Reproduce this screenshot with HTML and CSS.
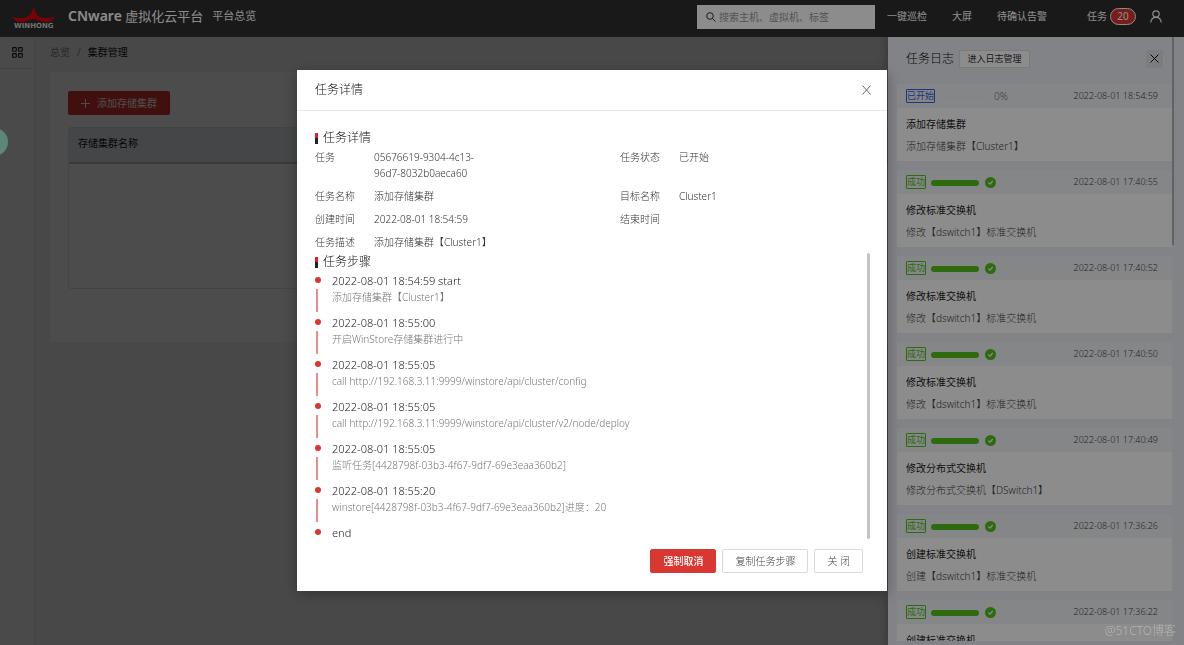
FILE: index.html
```html
<!DOCTYPE html>
<html lang="zh-CN">
<head>
<meta charset="utf-8">
<title>CNware 虚拟化云平台</title>
<link rel="stylesheet" href="styles.css">
</head>
<body>
<div class="app">
  <header class="topbar">
    <svg class="logo" width="44" height="22" viewBox="0 0 44 22" aria-label="WINHONG">
      <path fill="#e0000c" d="M0 9.500C5 11 10 12 14 10.500C18 9 20 5 21.500 0C23 5 25 9 29 10.500C33 12 38 11 43 9.500C41 13 38 15.500 33 15C28 14.500 25 12 21.500 12C18 12 15 14.500 10 15C5 15.500 2 13 0 9.500Z"/>
      <text x="2" y="21" class="logo-text">WINHONG</text>
    </svg>
    <h1 class="brand"><b>CNware</b> 虚拟化云平台</h1>
    <a class="nav-link" href="#">平台总览</a>
    <label class="search">
      <svg width="10" height="10" viewBox="0 0 10 10" fill="none" stroke="#333"><circle cx="4" cy="4" r="3.300"/><path d="M6.500 6.500L9.500 9.500"/></svg>
      <input type="text" placeholder="搜索主机、虚拟机、标签" aria-label="搜索">
    </label>
    <nav class="links">
      <a href="#">一键巡检</a>
      <a href="#">大屏</a>
      <a href="#">待确认告警</a>
    </nav>
    <a class="tasks" href="#">任务<span class="badge">20</span></a>
    <button class="user" aria-label="用户">
      <svg width="12" height="13" viewBox="0 0 12 13" fill="none" stroke="#fff" stroke-width="1.200"><circle cx="6" cy="4" r="3.200"/><path d="M.8 12.500C1 9.300 3 7.300 6 7.300S11 9.300 11.200 12.500"/></svg>
    </button>
  </header>
  <div class="workspace">
    <aside class="sidebar">
      <button class="menu" aria-label="菜单">
        <svg width="11" height="11" viewBox="0 0 11 11" fill="none" stroke="#222" stroke-width="1.100"><rect x=".6" y=".6" width="3.700" height="3.700" rx=".5"/><rect x="6.600" y=".6" width="3.700" height="3.700" rx=".5"/><rect x=".6" y="6.600" width="3.700" height="3.700" rx=".5"/><rect x="6.600" y="6.600" width="3.700" height="3.700" rx=".5"/></svg>
      </button>
    </aside>
    <main class="content">
      <nav class="crumbs"><a href="#">总览</a><i>/</i><span>集群管理</span></nav>
      <section class="panel">
        <button class="btn primary add"><svg width="9" height="9" viewBox="0 0 9 9" stroke="#fff"><path d="M4.500 0V9M0 4.500H9"/></svg>添加存储集群</button>
        <div class="table-box">
          <table><thead><tr><th>存储集群名称</th></tr></thead></table>
        </div>
      </section>
    </main>
    <div class="mask"></div>
    <aside class="drawer">
      <div class="drawer-head">
        <h2>任务日志</h2>
        <button class="log-btn">进入日志管理</button>
        <button class="drawer-close" aria-label="关闭"><svg width="9" height="9" viewBox="0 0 9 9" stroke="#111"><path d="M.5 .5L8.500 8.500M8.500 .5L.5 8.500"/></svg></button>
      </div>
      <div class="cards">
        <article class="card">
          <div class="card-head"><span class="tag blue">已开始</span><span class="bar empty"></span><span class="percent">0%</span><time>2022-08-01 18:54:59</time></div>
          <h3>添加存储集群</h3><p>添加存储集群【Cluster1】</p>
        </article>
        <article class="card">
          <div class="card-head"><span class="tag">成功</span><span class="bar"></span><svg class="ok" viewBox="0 0 11 11"><circle cx="5.500" cy="5.500" r="5.500"/><path d="M3.300 5.600L5 7.200L7.700 4"/></svg><time>2022-08-01 17:40:55</time></div>
          <h3>修改标准交换机</h3><p>修改【dswitch1】标准交换机</p>
        </article>
        <article class="card">
          <div class="card-head"><span class="tag">成功</span><span class="bar"></span><svg class="ok" viewBox="0 0 11 11"><circle cx="5.500" cy="5.500" r="5.500"/><path d="M3.300 5.600L5 7.200L7.700 4"/></svg><time>2022-08-01 17:40:52</time></div>
          <h3>修改标准交换机</h3><p>修改【dswitch1】标准交换机</p>
        </article>
        <article class="card">
          <div class="card-head"><span class="tag">成功</span><span class="bar"></span><svg class="ok" viewBox="0 0 11 11"><circle cx="5.500" cy="5.500" r="5.500"/><path d="M3.300 5.600L5 7.200L7.700 4"/></svg><time>2022-08-01 17:40:50</time></div>
          <h3>修改标准交换机</h3><p>修改【dswitch1】标准交换机</p>
        </article>
        <article class="card">
          <div class="card-head"><span class="tag">成功</span><span class="bar"></span><svg class="ok" viewBox="0 0 11 11"><circle cx="5.500" cy="5.500" r="5.500"/><path d="M3.300 5.600L5 7.200L7.700 4"/></svg><time>2022-08-01 17:40:49</time></div>
          <h3>修改分布式交换机</h3><p>修改分布式交换机【DSwitch1】</p>
        </article>
        <article class="card">
          <div class="card-head"><span class="tag">成功</span><span class="bar"></span><svg class="ok" viewBox="0 0 11 11"><circle cx="5.500" cy="5.500" r="5.500"/><path d="M3.300 5.600L5 7.200L7.700 4"/></svg><time>2022-08-01 17:36:26</time></div>
          <h3>创建标准交换机</h3><p>创建【dswitch1】标准交换机</p>
        </article>
        <article class="card">
          <div class="card-head"><span class="tag">成功</span><span class="bar"></span><svg class="ok" viewBox="0 0 11 11"><circle cx="5.500" cy="5.500" r="5.500"/><path d="M3.300 5.600L5 7.200L7.700 4"/></svg><time>2022-08-01 17:36:22</time></div>
          <h3>创建标准交换机</h3>
        </article>
      </div>
      <span class="drawer-scroll"></span>
    </aside>
    <span class="float-btn"></span>
  </div>
</div>

<div class="modal-layer">
  <section class="modal" role="dialog" aria-labelledby="dlg-title">
    <header class="modal-head">
      <h2 id="dlg-title">任务详情</h2>
      <button class="modal-close" aria-label="关闭"><svg width="9" height="10" viewBox="0 0 9 10" stroke="#666"><path d="M.5 .5L8.500 9.500M8.500 .5L.5 9.500"/></svg></button>
    </header>
    <div class="modal-body">
      <h3 class="section">任务详情</h3>
      <dl class="info">
        <dt>任务</dt><dd>05676619-9304-4c13-<wbr>96d7-8032b0aeca60</dd><dt>任务状态</dt><dd>已开始</dd>
        <dt>任务名称</dt><dd>添加存储集群</dd><dt>目标名称</dt><dd>Cluster1</dd>
        <dt>创建时间</dt><dd>2022-08-01 18:54:59</dd><dt>结束时间</dt><dd></dd>
        <dt>任务描述</dt><dd class="wide">添加存储集群【Cluster1】</dd>
      </dl>
      <div class="steps-box">
        <h3 class="section">任务步骤</h3>
        <ol class="steps">
          <li><b>2022-08-01 18:54:59 start</b><span>添加存储集群【Cluster1】</span></li>
          <li><b>2022-08-01 18:55:00</b><span>开启WinStore存储集群进行中</span></li>
          <li><b>2022-08-01 18:55:05</b><span>call http://192.168.3.11:9999/winstore/api/cluster/config</span></li>
          <li><b>2022-08-01 18:55:05</b><span>call http://192.168.3.11:9999/winstore/api/cluster/v2/node/deploy</span></li>
          <li><b>2022-08-01 18:55:05</b><span>监听任务[4428798f-03b3-4f67-9df7-69e3eaa360b2]</span></li>
          <li><b>2022-08-01 18:55:20</b><span>winstore[4428798f-03b3-4f67-9df7-69e3eaa360b2]进度：20</span></li>
          <li><b>end</b></li>
        </ol>
        <span class="steps-scroll"></span>
      </div>
    </div>
    <footer class="modal-foot">
      <button class="btn primary strong">强制取消</button>
      <button class="btn">复制任务步骤</button>
      <button class="btn">关 闭</button>
    </footer>
  </section>
</div>
<span class="watermark">@51CTO博客</span>
</body>
</html>
```

FILE: styles.css
```css
* { box-sizing: border-box; }
body, h1, h2, h3, p, dl, dd, ol { margin: 0; padding: 0; }
body {
  font: 300 10px/16px "Noto Sans", "Noto Sans CJK SC", sans-serif;
  color: #333;
  overflow: hidden;
}
button, input { font: inherit; color: inherit; }
button { border: 0; padding: 0; background: none; cursor: pointer; }
a { color: inherit; text-decoration: none; }
h1, h2, h3 { font-weight: 300; }
svg { display: block; flex: none; }

.app { display: flex; flex-direction: column; height: 100vh; }

/* top bar */
.topbar {
  display: flex;
  align-items: center;
  height: 37px;
  flex: none;
  padding: 0 22px 5px 12px;
  background: #2f2f2f;
  color: #fff;
  font-weight: 400;
}
.logo { margin: 4px 12px 0 0; }
.logo-text { font: bold 7px "DejaVu Sans", sans-serif; fill: #ccc; }
.brand { font-size: 13px; line-height: 20px; font-weight: 400; white-space: nowrap; margin-right: 9px; }
.brand b { font: 600 14px "Noto Sans", sans-serif; }
.nav-link { font-size: 11px; }
.search {
  display: flex;
  align-items: center;
  gap: 3px;
  width: 178px;
  height: 24px;
  margin: 2px 12px 0 auto;
  padding: 0 9px;
  background: #fff;
}
.search input { flex: 1; min-width: 0; border: 0; padding: 0; outline: 0; background: none; }
.search input::placeholder { color: #999; opacity: 1; }
.links { display: flex; gap: 25px; margin-right: 40px; }
.tasks { display: flex; align-items: center; gap: 3px; }
.badge {
  width: 26px;
  height: 17px;
  line-height: 15px;
  text-align: center;
  border: 1px solid #fff;
  border-radius: 9px;
  background: #d93732;
}
.user { margin-left: 14px; }

/* workspace */
.workspace { flex: 1; min-height: 0; display: flex; position: relative; background: #f0f0f0; overflow: hidden; }
.sidebar { width: 35px; flex: none; border-right: 1px solid #e4e4e4; background: #f6f6f6; }
.menu { display: flex; align-items: center; justify-content: center; width: 100%; height: 32px; border-bottom: 1px solid #dcdcdc; }
.content { flex: 1; padding: 7px 16px 0 15px; font-weight: 400; }
.crumbs { display: flex; gap: 7px; }
.crumbs a, .crumbs i { color: #888; font-style: normal; }
.crumbs span { color: #111; }
.panel { margin-top: 12px; padding: 19px 18px 53px; background: #fcfcfc; }
.table-box { margin-top: 12px; height: 162px; border: 1px solid #dde2e8; border-radius: 3px; }
table { width: 100%; border-collapse: collapse; }
th {
  height: 35px;
  padding: 0 9px 4px;
  text-align: left;
  font-weight: 400;
  color: #111;
  background: #e4e9ef;
  border-bottom: 2px solid #c0c0c0;
}
.mask { position: absolute; inset: 0; background: rgba(0, 0, 0, .45); }
.float-btn {
  position: absolute;
  left: -20px;
  top: 91px;
  width: 28px;
  height: 28px;
  border-radius: 50%;
  background: #a9f5df;
}

/* buttons */
.btn {
  height: 24px;
  padding: 0 12px;
  border: 1px solid #d9d9d9;
  border-radius: 2px;
  background: #fff;
  color: #444;
}
.btn.primary { border-color: #d93732; background: #d93732; color: #fff; }
.btn.strong { font-weight: 500; }
.add { display: flex; align-items: center; justify-content: center; gap: 7px; width: 102px; }

/* task drawer */
.drawer {
  position: absolute;
  top: 0;
  right: 0;
  bottom: 0;
  width: 296px;
  padding: 0 12px 4px 9px;
  display: flex;
  flex-direction: column;
  background: #ebeef5;
  box-shadow: -3px 0 8px rgba(0, 0, 0, .2);
}
.drawer-head { display: flex; align-items: center; flex: none; height: 47px; padding: 0 9px 4px; }
.drawer-head h2 { font-size: 12px; font-weight: 300; margin-right: 5px; color: #111; }
.log-btn { width: 71px; height: 18px; font-size: 9px; font-weight: 400; line-height: 16px; border: 1px solid #dcdfe2; background: #fff; }
.drawer-close { display: flex; align-items: center; justify-content: center; width: 17px; height: 18px; margin-left: auto; background: #e2e4e8; }
.cards { display: flex; flex-direction: column; gap: 9px; flex: 1; min-height: 0; overflow: hidden; }
.card { flex: none; height: 77px; background: #fff; }
.card-head { display: flex; align-items: center; height: 24px; padding: 0 14px 0 9px; background: #f3f5f8; }
.tag { line-height: 12px; font-size: 9px; font-weight: 400; border: 1px solid #52c41a; border-radius: 1px; color: #52c41a; margin-right: 5px; }
.tag.blue { border-color: #3b62e0; color: #3b62e0; }
.bar { width: 48px; height: 6px; margin-top: 1px; border-radius: 3px; background: #52c41a; }
.bar.empty { background: #f1f3f6; }
.percent { margin-left: 6px; color: #777; }
.ok { width: 11px; height: 11px; margin: 1px 0 0 6px; fill: #52c41a; }
.ok path { fill: none; stroke: #fff; stroke-width: 1.2; }
.card time { margin-left: auto; font-size: 9px; font-weight: 300; color: #444; }
.card h3, .card p { padding: 0 9px; font-size: 10px; }
.card h3 { margin-top: 8px; font-weight: 400; color: #222; }
.card p { margin-top: 6px; color: #444; }
.drawer-scroll { position: absolute; right: 10px; top: 0; width: 2px; height: 208px; background: #b0b3ba; }

/* task dialog */
.modal-layer { position: fixed; inset: 0; padding-top: 70px; background: rgba(0, 0, 0, .45); }
.modal { width: 590px; margin: 0 auto; background: #fff; box-shadow: 0 3px 14px rgba(0, 0, 0, .3); }
.modal-head { display: flex; align-items: center; justify-content: space-between; height: 41px; padding: 0 16px 0 18px; border-bottom: 1px solid #e8e8e8; }
.modal-head h2 { font-size: 12px; color: #111; }
.modal-body { padding: 18px 18px 0; }
.section { display: flex; align-items: center; gap: 5px; height: 18px; font-size: 12px; color: #111; }
.section::before { content: ""; width: 3px; height: 11px; background: linear-gradient(#e02020 50%, #222 50%); }
.info { display: grid; grid-template-columns: 59px 246px 59px 1fr; row-gap: 7px; margin-top: 2px; color: #333; }
.info dd { max-width: 110px; }
.info dd.wide { grid-column: span 3; max-width: none; }
.steps-box { position: relative; height: 293px; margin-top: 3px; }
.steps { list-style: none; }
.steps li { position: relative; height: 42px; padding: 2px 0 0 17px; }
.steps li::before { content: ""; position: absolute; left: 0; top: 6px; width: 6px; height: 6px; border-radius: 50%; background: #d93732; }
.steps li:not(:last-child)::after { content: ""; position: absolute; left: 1px; top: 18px; width: 2px; height: 23px; background: #eb8c89; }
.steps b, .steps span { display: block; }
.steps b { font-size: 11px; font-weight: 300; color: #222; }
.steps span { color: #777; }
.steps-box .steps-scroll { position: absolute; right: -1px; top: 0; width: 3px; height: 286px; border-radius: 2px; background: #c4c4c4; }
.modal-foot { display: flex; justify-content: flex-end; gap: 6px; padding: 3px 24px 18px; }

.watermark { position: fixed; right: 8px; bottom: 6px; font-size: 12px; color: #b4b4b4; }
```
